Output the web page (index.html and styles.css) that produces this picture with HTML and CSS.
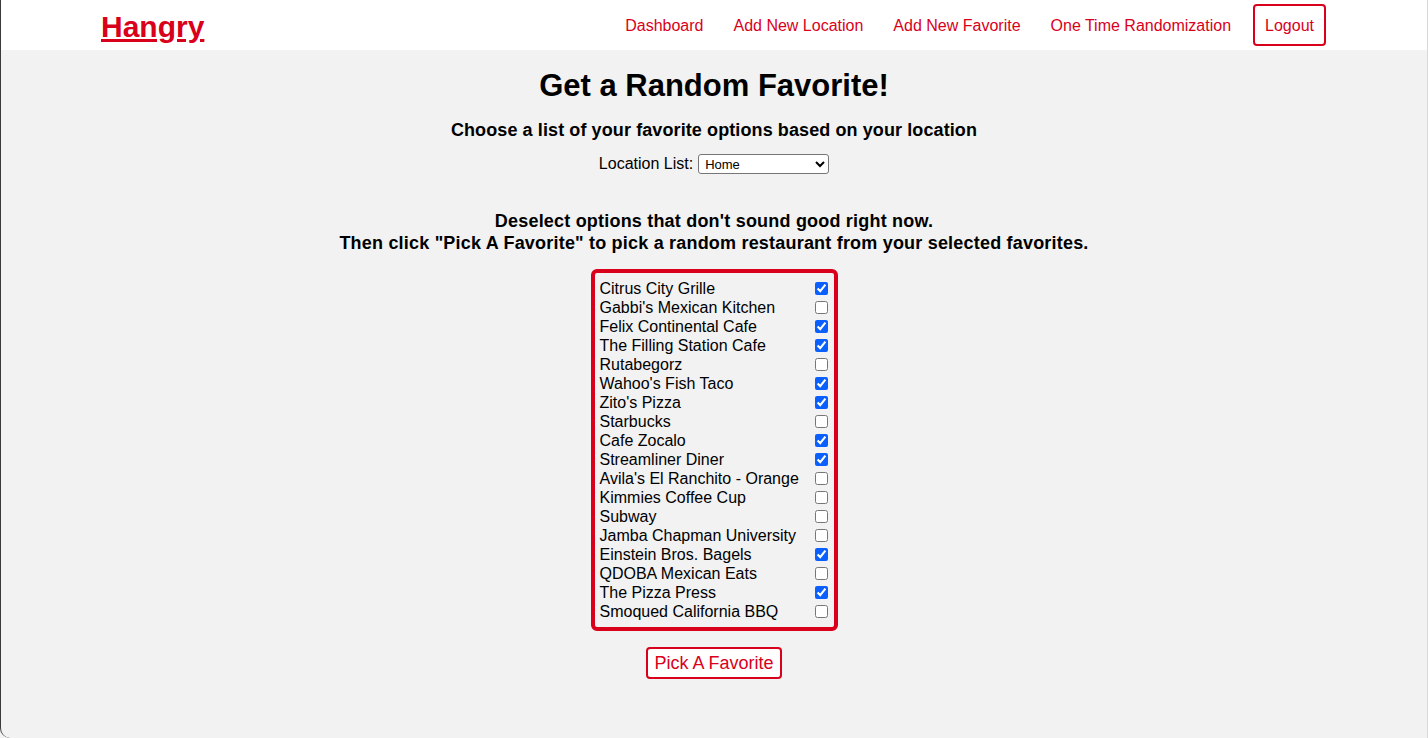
FILE: index.html
```html
<!DOCTYPE html>
<html lang="en">
<head>
<meta charset="utf-8">
<title>Hangry</title>
<link rel="stylesheet" href="styles.css">
</head>
<body>
<div class="frame">
  <header class="topbar">
    <a class="brand" href="#">Hangry</a>
    <nav class="nav">
      <a href="#">Dashboard</a>
      <a href="#">Add New Location</a>
      <a href="#">Add New Favorite</a>
      <a href="#">One Time Randomization</a>
      <a href="#" class="logout">Logout</a>
    </nav>
  </header>
  <main class="main">
    <h1 class="title">Get a Random Favorite!</h1>
    <h2 class="subtitle">Choose a list of your favorite options based on your location</h2>
    <div class="location">
      <label for="loc">Location List:</label>
      <select id="loc" class="select"><option>Home</option></select>
    </div>
    <p class="instructions">Deselect options that don't sound good right now.<br>Then click "Pick A Favorite" to pick a random restaurant from your selected favorites.</p>
    <form class="list">
      <label class="item"><span>Citrus City Grille</span><input type="checkbox" checked></label>
      <label class="item"><span>Gabbi's Mexican Kitchen</span><input type="checkbox"></label>
      <label class="item"><span>Felix Continental Cafe</span><input type="checkbox" checked></label>
      <label class="item"><span>The Filling Station Cafe</span><input type="checkbox" checked></label>
      <label class="item"><span>Rutabegorz</span><input type="checkbox"></label>
      <label class="item"><span>Wahoo's Fish Taco</span><input type="checkbox" checked></label>
      <label class="item"><span>Zito's Pizza</span><input type="checkbox" checked></label>
      <label class="item"><span>Starbucks</span><input type="checkbox"></label>
      <label class="item"><span>Cafe Zocalo</span><input type="checkbox" checked></label>
      <label class="item"><span>Streamliner Diner</span><input type="checkbox" checked></label>
      <label class="item"><span>Avila's El Ranchito - Orange</span><input type="checkbox"></label>
      <label class="item"><span>Kimmies Coffee Cup</span><input type="checkbox"></label>
      <label class="item"><span>Subway</span><input type="checkbox"></label>
      <label class="item"><span>Jamba Chapman University</span><input type="checkbox"></label>
      <label class="item"><span>Einstein Bros. Bagels</span><input type="checkbox" checked></label>
      <label class="item"><span>QDOBA Mexican Eats</span><input type="checkbox"></label>
      <label class="item"><span>The Pizza Press</span><input type="checkbox" checked></label>
      <label class="item"><span>Smoqued California BBQ</span><input type="checkbox"></label>
    </form>
    <button class="pick" type="button">Pick A Favorite</button>
  </main>
</div>
</body>
</html>
```
FILE: styles.css
```css
html, body {
  margin: 0;
  padding: 0;
  height: 100%;
}
body {
  font-family: "Liberation Sans", Arial, sans-serif;
  color: #000;
  background: #f2f2f2;
}
.frame {
  min-height: 100%;
  box-sizing: border-box;
  border-left: 1px solid #3a3a3a;
  border-right: 1px solid #d8d8d8;
  border-bottom-left-radius: 10px;
  background: #f2f2f2;
}
.topbar {
  height: 50px;
  background: #fff;
  display: flex;
  align-items: center;
  justify-content: space-between;
  padding: 0 101px 0 100px;
}
.brand {
  color: #d9001b;
  font-size: 30px;
  font-weight: bold;
  text-decoration: underline;
  text-underline-offset: 2px;
  text-decoration-thickness: 3px;
  margin-top: 3px;
}
.nav {
  display: flex;
  align-items: center;
  gap: 0;
}
.nav a {
  color: #d9001b;
  text-decoration: none;
  font-size: 16px;
  line-height: 18px;
  padding: 11px 13px 9px;
  border: 2px solid transparent;
  border-radius: 4px;
}
.nav a.logout {
  border-color: #d9001b;
  padding: 11px 10px 9px;
  margin-left: 7px;
}
.main {
  display: flex;
  flex-direction: column;
  align-items: center;
  text-align: center;
}
.title {
  font-size: 31px;
  line-height: 40px;
  margin: 16px 0 0;
}
.subtitle {
  font-size: 18px;
  line-height: 24px;
  letter-spacing: 0.1px;
  margin: 12px 0 0;
}
.location {
  margin-top: 11px;
  font-size: 16px;
  line-height: 22px;
  display: flex;
  align-items: center;
  gap: 5px;
}
.select {
  width: 131px;
  height: 20px;
  font-family: "Liberation Sans", Arial, sans-serif;
  font-size: 13px;
  border: 1px solid #767676;
  border-radius: 3px;
  background: #fff;
  padding: 0 2px;
}
.instructions {
  font-size: 18px;
  font-weight: bold;
  line-height: 22px;
  letter-spacing: 0.2px;
  margin: 35px 0 0;
}
.list {
  margin-top: 15px;
  width: 247px;
  box-sizing: border-box;
  border: 4px solid #d9001b;
  border-radius: 6px;
  padding: 6px 6px 6px 5px;
  text-align: left;
}
.item {
  display: flex;
  justify-content: space-between;
  align-items: center;
  font-size: 16px;
  line-height: 19px;
  height: 19px;
}
.item input {
  width: 13px;
  height: 13px;
  margin: 0;
  accent-color: #0a60ff;
}
.pick {
  margin-top: 16px;
  height: 32px;
  padding: 0 6px;
  font-family: "Liberation Sans", Arial, sans-serif;
  font-size: 18px;
  color: #d9001b;
  background: #fff;
  border: 2px solid #d9001b;
  border-radius: 4px;
}
```
